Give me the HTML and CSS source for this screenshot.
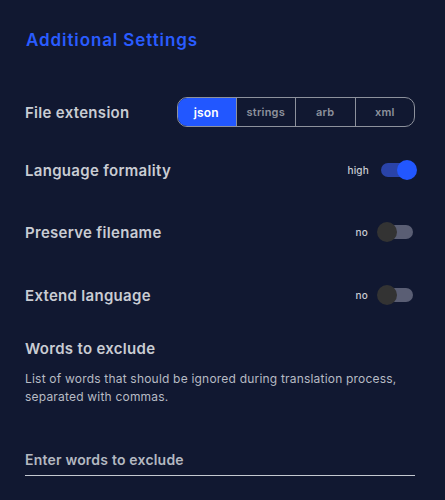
FILE: index.html
```html
<!DOCTYPE html>
<html>
<head>
<meta charset="utf-8">
<link rel="stylesheet" href="styles.css">
</head>
<body>
<div class="panel">
  <h2 class="title">Additional Settings</h2>
  <div class="row row-ext">
    <span class="label">File extension</span>
    <div class="seg">
      <span class="seg-item active">json</span>
      <span class="seg-item">strings</span>
      <span class="seg-item">arb</span>
      <span class="seg-item">xml</span>
    </div>
  </div>
  <div class="row row-formality">
    <span class="label">Language formality</span>
    <div class="switch-wrap">
      <span class="switch-text">high</span>
      <span class="switch on"><span class="knob"></span></span>
    </div>
  </div>
  <div class="row row-preserve">
    <span class="label">Preserve filename</span>
    <div class="switch-wrap">
      <span class="switch-text">no</span>
      <span class="switch off"><span class="knob"></span></span>
    </div>
  </div>
  <div class="row row-extend">
    <span class="label">Extend language</span>
    <div class="switch-wrap">
      <span class="switch-text">no</span>
      <span class="switch off"><span class="knob"></span></span>
    </div>
  </div>
  <div class="words">
    <div class="label">Words to exclude</div>
    <p class="desc">List of words that should be ignored during translation process, separated with commas.</p>
  </div>
  <div class="input-field">
    <span class="placeholder">Enter words to exclude</span>
  </div>
</div>
</body>
</html>
```
FILE: styles.css
```css
html, body {
  margin: 0;
  padding: 0;
  background: #111831;
  height: 100%;
}
body {
  font-family: Inter, "Noto Sans", sans-serif;
  color: #c9ccd3;
}
.panel {
  padding: 27px 30px 0 25px;
}
.title {
  margin: 0;
  font-size: 17px;
  font-weight: 600;
  color: #2a5cff;
  line-height: 26px;
  padding-left: 1px;
  letter-spacing: 0.9px;
}
.row {
  display: flex;
  align-items: center;
  justify-content: space-between;
}
.row-ext {
  margin-top: 44px;
  height: 30px;
}
.row-formality {
  margin-top: 28px;
  height: 30px;
}
.row-preserve {
  margin-top: 32px;
  height: 30px;
}
.row-extend {
  margin-top: 33px;
  height: 30px;
}
.label {
  font-size: 15px;
  font-weight: 600;
  color: #c9ccd3;
  letter-spacing: 0.3px;
}
.seg {
  display: flex;
  border: 1px solid #8d919c;
  border-radius: 10px;
  height: 28px;
  width: 236px;
  overflow: hidden;
}
.seg-item {
  flex: 1;
  display: flex;
  align-items: center;
  justify-content: center;
  font-size: 11px;
  font-weight: 600;
  color: #8d919c;
  border-left: 1px solid #8d919c;
  letter-spacing: 0.2px;
}
.seg-item:first-child {
  border-left: none;
}
.seg-item.active {
  background: #2257ff;
  color: #ffffff;
  margin: -1px 0 -1px -1px;
  border-radius: 10px 0 0 10px;
  font-size: 12px;
}
.switch-wrap {
  display: flex;
  align-items: center;
  gap: 12px;
}
.switch-text {
  font-size: 10px;
  font-weight: 500;
  color: #c9ccd3;
  letter-spacing: 0.2px;
}
.switch {
  position: relative;
  width: 34px;
  height: 14px;
  border-radius: 7px;
}
.switch.on {
  background: #2a43a8;
}
.switch.off {
  background: #5a5e74;
  width: 33px;
  margin-right: 2px;
}
.knob {
  position: absolute;
  top: -3px;
  width: 20px;
  height: 20px;
  border-radius: 50%;
}
.switch.on .knob {
  right: -2px;
  background: #2257ff;
}
.switch.off .knob {
  left: -3px;
  background: #333333;
}
.words {
  margin-top: 29px;
}
.desc {
  margin: 12px 0 0;
  font-size: 12px;
  line-height: 18px;
  color: #b7bbc4;
  letter-spacing: 0.2px;
}
.input-field {
  margin-top: 43px;
  border-bottom: 1px solid #c4c8d0;
  padding-bottom: 6px;
}
.placeholder {
  font-size: 14px;
  font-weight: 600;
  color: #b4b8c1;
  letter-spacing: 0.2px;
}
```
